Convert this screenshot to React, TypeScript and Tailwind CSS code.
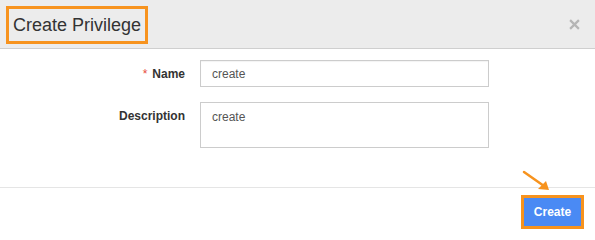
import React from "react";

export default function App() {
  return (
    <div className="w-[595px] h-[240px] bg-white relative overflow-hidden" style={{ fontFamily: "'Liberation Sans', Arial, sans-serif" }}>
      {/* Header */}
      <div className="h-[49px] bg-[#ececec] border-b border-[#cfcfcf] flex items-center justify-between pl-[6px] pr-[14px]">
        <div className="h-[38px] border-[3px] border-[#f7931e] flex items-center px-[4px] mt-[1px]">
          <span className="text-[18px] text-[#333] leading-none">Create Privilege</span>
        </div>
        <svg width="11" height="11" viewBox="0 0 10 10" className="mr-[1px]">
          <path d="M1 1 L9 9 M9 1 L1 9" stroke="#b5b5b5" strokeWidth="2" />
        </svg>
      </div>
      {/* Body */}
      <div className="pt-[11px] h-[139px] border-b border-[#e5e5e5]">
        <div className="flex items-start">
          <div className="w-[185px] text-right pt-[5px] text-[12px] font-bold text-[#333]">
            <span className="text-[#e74c3c] mr-[5px] font-normal">*</span>Name
          </div>
          <div className="ml-[15px] w-[289px] h-[27px] border border-[#ccc] shadow-[inset_0_1px_1px_rgba(0,0,0,0.05)] text-[12px] text-[#555] pl-[11px] flex items-center">
            create
          </div>
        </div>
        <div className="flex items-start mt-[15px]">
          <div className="w-[185px] text-right pt-[5px] text-[12px] font-bold text-[#333]">Description</div>
          <div className="ml-[15px] w-[289px] h-[46px] border border-[#ccc] text-[12px] text-[#555] pl-[11px] pt-[5px]">
            create
          </div>
        </div>
      </div>
      {/* Footer */}
      <div className="flex justify-end pr-[11px] pt-[7px]">
        <div className="w-[63px] h-[34px] border-[3px] border-[#f7931e] bg-[#4a8af4] flex items-center justify-center">
          <span className="text-white text-[12px] font-bold">Create</span>
        </div>
      </div>
      {/* Arrow */}
      <svg className="absolute left-[520px] top-[168px]" width="34" height="26" viewBox="0 0 34 26">
        <path d="M4 4 L24 18" stroke="#f7931e" strokeWidth="2.5" strokeLinecap="round" />
        <path d="M29 22 L18 21 L26 13 Z" fill="#f7931e" />
      </svg>
    </div>
  );
}
